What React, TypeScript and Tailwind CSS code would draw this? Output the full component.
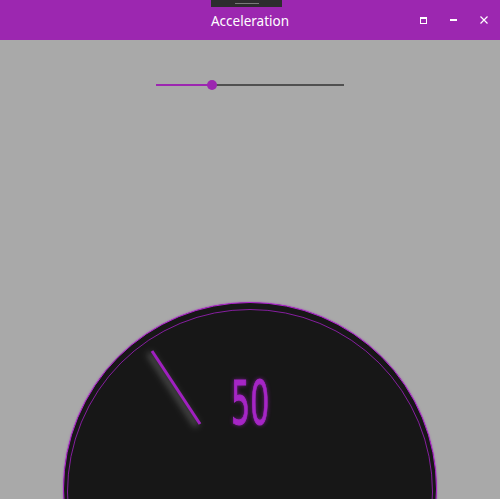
export default function App() {
  const value = 50;
  const pct = 0.3;

  return (
    <div className="relative flex h-[499px] w-[500px] flex-col overflow-hidden bg-[#a9a9a9] font-['Noto_Sans',sans-serif]">
      {/* Title bar */}
      <div className="relative flex h-[40px] shrink-0 items-center justify-center bg-[#9c27b0]">
        <div className="absolute left-[211px] top-0 flex h-[7px] w-[71px] justify-center bg-[#2d2d2d]">
          <div className="mt-[3px] h-px w-[24px] bg-[#7a7a7a]" />
        </div>
        <span className="pt-[3px] text-[13.5px] leading-none text-white">Acceleration</span>
        <div className="absolute right-[12px] top-[16px] flex items-center gap-[23px]">
          <div className="h-[7px] w-[7px] border border-t-2 border-white" />
          <div className="h-[1.5px] w-[7px] bg-white" />
          <svg width="8" height="8" viewBox="0 0 8 8" className="text-white">
            <path d="M0.5 0.5 L7.5 7.5 M7.5 0.5 L0.5 7.5" stroke="currentColor" strokeWidth="1.2" />
          </svg>
        </div>
      </div>

      {/* Slider */}
      <div className="mt-[44px] flex justify-center">
        <div className="relative h-[2px] w-[188px] bg-[#505050]">
          <div className="h-full bg-[#9c27b0]" style={{ width: `${pct * 100}%` }} />
          <div
            className="absolute top-[-4px] h-[10px] w-[10px] -translate-x-1/2 rounded-full bg-[#9c27b0]"
            style={{ left: `${pct * 100}%` }}
          />
        </div>
      </div>

      {/* Gauge */}
      <div className="mt-[216px] flex justify-center">
        <div className="relative h-[374px] w-[374px] shrink-0 overflow-hidden rounded-full border-[1.5px] border-[#b020d0] bg-[#171717] shadow-[0_0_2px_rgba(160,32,192,0.6)]">
          <div className="absolute left-[3px] right-[3px] top-[6px] h-[366px] rounded-full border border-[#a020c0]/80" />
          <svg className="absolute inset-0" width="374" height="374" viewBox="0 0 374 374">
            <defs>
              <filter id="blur" x="-50%" y="-50%" width="200%" height="200%">
                <feGaussianBlur stdDeviation="3" />
              </filter>
            </defs>
            <line x1="85" y1="50" x2="133" y2="123" stroke="rgba(255,255,255,0.22)" strokeWidth="6" filter="url(#blur)" />
            <line x1="88" y1="48" x2="136" y2="121" stroke="#a020c0" strokeWidth="3" />
          </svg>
          <div className="flex justify-center pt-[70px]">
            <span className="inline-block origin-center scale-x-[0.5] font-['DejaVu_Sans',sans-serif] text-[60px] leading-none text-[#a626c6] [-webkit-text-stroke:1px_#a626c6] [text-shadow:0_0_6px_rgba(160,32,192,0.8)]">
              {value}
            </span>
          </div>
        </div>
      </div>
    </div>
  );
}
